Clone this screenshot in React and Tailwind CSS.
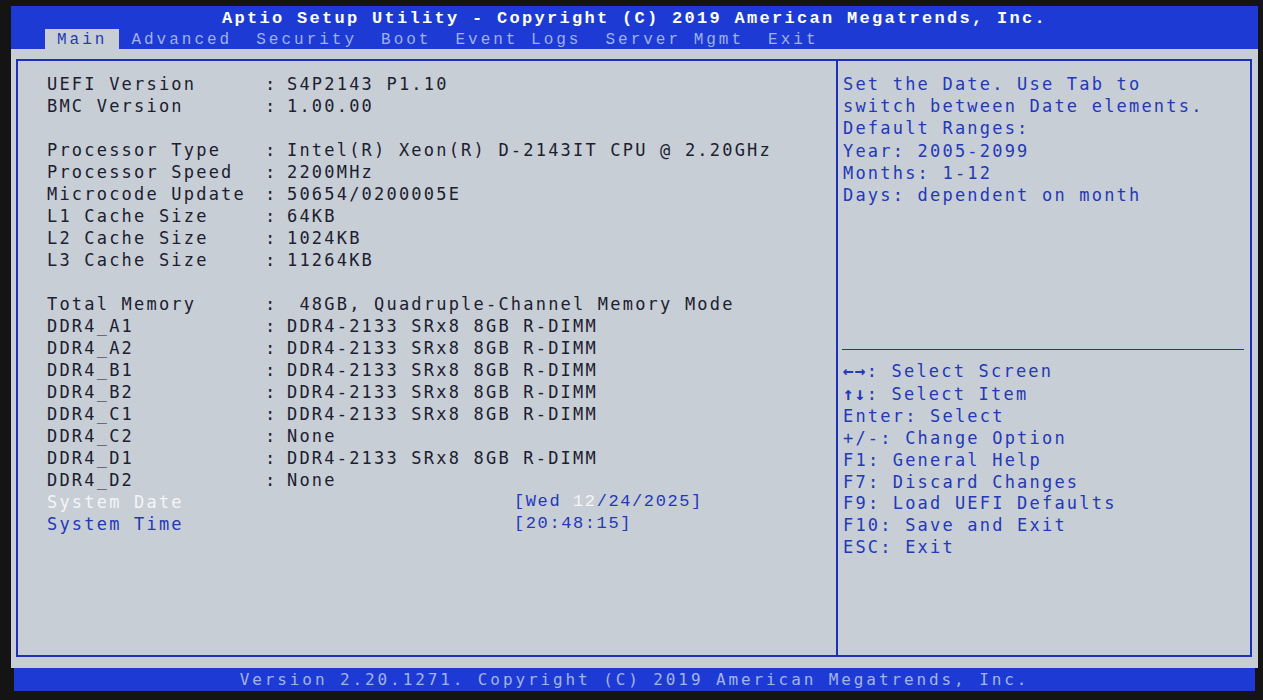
import React from 'react';

const wide = "font-['DejaVu_Sans_Mono',monospace] text-[17px] tracking-[2.2px]";
const narrow = "font-['Liberation_Mono',monospace] text-[16px]";

const tabs = ['Main', 'Advanced', 'Security', 'Boot', 'Event Logs', 'Server Mgmt', 'Exit'];

const rows = [
    ['UEFI Version', 'S4P2143 P1.10'],
    ['BMC Version', '1.00.00'],
    null,
    ['Processor Type', 'Intel(R) Xeon(R) D-2143IT CPU @ 2.20GHz'],
    ['Processor Speed', '2200MHz'],
    ['Microcode Update', '50654/0200005E'],
    ['L1 Cache Size', '64KB'],
    ['L2 Cache Size', '1024KB'],
    ['L3 Cache Size', '11264KB'],
    null,
    ['Total Memory', ' 48GB, Quadruple-Channel Memory Mode'],
    ['DDR4_A1', 'DDR4-2133 SRx8 8GB R-DIMM'],
    ['DDR4_A2', 'DDR4-2133 SRx8 8GB R-DIMM'],
    ['DDR4_B1', 'DDR4-2133 SRx8 8GB R-DIMM'],
    ['DDR4_B2', 'DDR4-2133 SRx8 8GB R-DIMM'],
    ['DDR4_C1', 'DDR4-2133 SRx8 8GB R-DIMM'],
    ['DDR4_C2', 'None'],
    ['DDR4_D1', 'DDR4-2133 SRx8 8GB R-DIMM'],
    ['DDR4_D2', 'None'],
];

const helpTop = [
    'Set the Date. Use Tab to',
    'switch between Date elements.',
    'Default Ranges:',
    'Year: 2005-2099',
    'Months: 1-12',
    'Days: dependent on month',
];

// arrow keys get drawn heavier in the original
const keys = [
    ['←→', ': Select Screen'],
    ['↑↓', ': Select Item'],
    ['Enter', ': Select'],
    ['+/-', ': Change Option'],
    ['F1', ': General Help'],
    ['F7', ': Discard Changes'],
    ['F9', ': Load UEFI Defaults'],
    ['F10', ': Save and Exit'],
    ['ESC', ': Exit'],
];

export default function App() {
    return (
        <div className="w-[1263px] h-[700px] bg-[#141414] pt-[6px] pl-[11px] pr-[5px] pb-[9px] flex flex-col overflow-hidden">
            {/* header with title + tabs */}
            <div className="h-[43px] bg-[#1d3bd4] flex flex-col">
                <div className="h-[24px] pt-[2px] flex items-center justify-center">
                    <span className="font-['Liberation_Mono',monospace] font-bold text-[17px] tracking-[2.3px] text-white leading-none whitespace-pre">
                        Aptio Setup Utility - Copyright (C) 2019 American Megatrends, Inc.
                    </span>
                </div>
                <div className="flex pl-[34px] mt-auto h-[21px]">
                    {tabs.map((t, i) => (
                        <div
                            key={t}
                            className={`px-[12px] pt-[3px] flex items-center leading-none whitespace-pre ${narrow} tracking-[3px] ${i === 0 ? 'bg-[#c7ced5] text-[#2438b8]' : 'text-[#9fb1ea]'}`}
                        >
                            {t}
                        </div>
                    ))}
                </div>
            </div>

            {/* main gray area */}
            <div className="flex-1 bg-[#c7ced5] pt-[10px] pb-[11px] pl-[5px] pr-[6px] flex">
                <div className="flex-1 border-2 border-[#1c30b8] flex">
                    {/* left column */}
                    <div className="w-[818px] pt-[12px] pl-[29px] leading-[22px]">
                        {rows.map((r, i) =>
                            r ? (
                                <div key={i} className={`flex whitespace-pre text-[#1c2030] ${wide}`}>
                                    <span className="w-[218px] shrink-0">{r[0]}</span>
                                    <span className="w-[22px] shrink-0">:</span>
                                    <span>{r[1]}</span>
                                </div>
                            ) : (
                                <div key={i} className="h-[22px]" />
                            )
                        )}
                        <div className="flex whitespace-pre">
                            <span className={`w-[467px] shrink-0 text-[#f3f5f9] ${wide}`}>System Date</span>
                            <span className={`${narrow} text-[17px] tracking-[1.6px] text-[#2438b8]`}>
                                [Wed <span className="text-[#f3f5f9]">12</span>/24/2025]
                            </span>
                        </div>
                        <div className="flex whitespace-pre">
                            <span className={`w-[467px] shrink-0 text-[#2438b8] ${wide}`}>System Time</span>
                            <span className={`${narrow} text-[17px] tracking-[1.6px] text-[#2438b8]`}>[20:48:15]</span>
                        </div>
                    </div>

                    {/* right help column */}
                    <div className="flex-1 border-l-2 border-[#1c30b8] flex flex-col">
                        <div className={`h-[288px] pt-[12px] pl-[5px] leading-[22.2px] text-[#2438b8] whitespace-pre ${wide}`}>
                            {helpTop.map((l) => (
                                <div key={l}>{l}</div>
                            ))}
                        </div>
                        <div className="ml-[4px] mr-[6px] border-t border-[#1c30b8]" />
                        <div className={`pt-[10px] pl-[5px] leading-[21.9px] text-[#2438b8] whitespace-pre ${wide}`}>
                            {keys.map(([k, v], i) => (
                                <div key={k}>
                                    <span className={i < 2 ? 'font-bold text-[18px] tracking-[1px]' : ''}>{k}</span>
                                    {v}
                                </div>
                            ))}
                        </div>
                    </div>
                </div>
            </div>

            {/* footer bar */}
            <div className="h-[23px] bg-[#1d3bd4] flex items-center justify-center ml-[3px] mr-[3px]">
                <span className="font-['DejaVu_Sans_Mono',monospace] text-[16px] tracking-[2.9px] text-[#a4b3e4] leading-none whitespace-pre">
                    Version 2.20.1271. Copyright (C) 2019 American Megatrends, Inc.
                </span>
            </div>
        </div>
    );
}
